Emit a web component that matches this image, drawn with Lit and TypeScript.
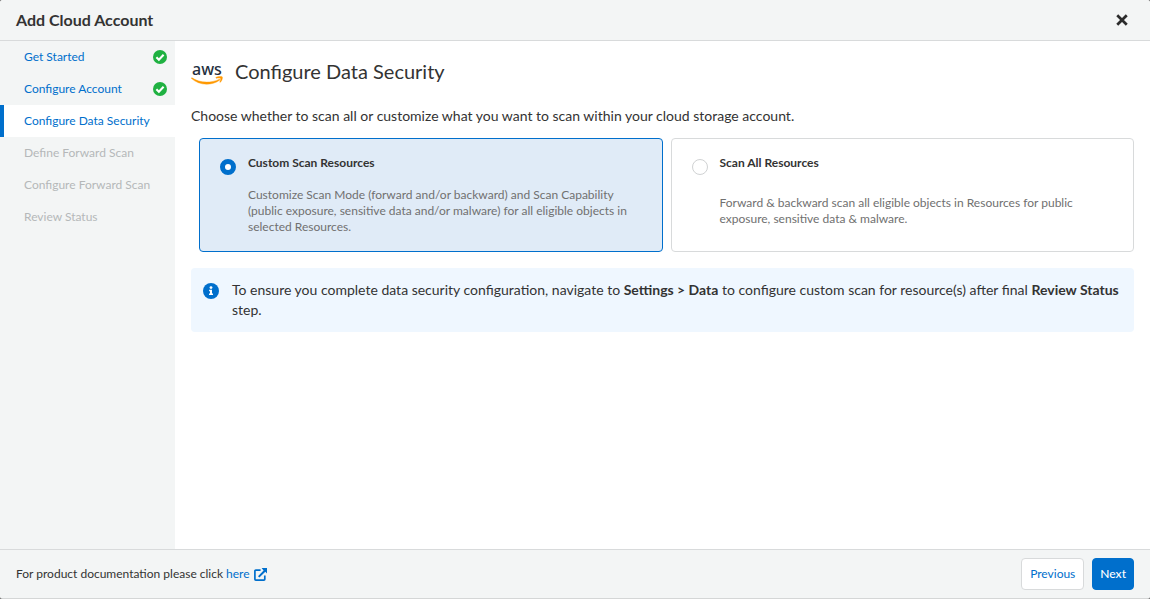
import { LitElement, html, css, svg } from "lit";
import { customElement, state } from "lit/decorators.js";

interface Step {
  label: string;
  status: "done" | "current" | "pending";
}

interface ScanOption {
  id: string;
  title: string;
  text: string;
}

const STEPS: Step[] = [
  { label: "Get Started", status: "done" },
  { label: "Configure Account", status: "done" },
  { label: "Configure Data Security", status: "current" },
  { label: "Define Forward Scan", status: "pending" },
  { label: "Configure Forward Scan", status: "pending" },
  { label: "Review Status", status: "pending" },
];

const OPTIONS: ScanOption[] = [
  {
    id: "custom",
    title: "Custom Scan Resources",
    text: "Customize Scan Mode (forward and/or backward) and Scan Capability (public exposure, sensitive data and/or malware) for all eligible objects in selected Resources.",
  },
  {
    id: "all",
    title: "Scan All Resources",
    text: "Forward & backward scan all eligible objects in Resources for public exposure, sensitive data & malware.",
  },
];

const checkIcon = html`<svg width="14" height="14" viewBox="0 0 14 14" aria-hidden="true">
  <circle cx="7" cy="7" r="7" fill="#1fb141" />
  <path d="M3.4 7.2l2.5 2.5 4.7-4.9" fill="none" stroke="#fff" stroke-width="2.1" />
</svg>`;

const closeIcon = html`<svg width="12" height="12" viewBox="0 0 12 12" aria-hidden="true">
  <path d="M2.2 2.2l7.6 7.6M9.8 2.2l-7.6 7.6" fill="none" stroke="#2b2b2b" stroke-width="2.7" stroke-linecap="square" stroke-linejoin="round" />
</svg>`;

const infoIcon = html`<svg width="16" height="16" viewBox="0 0 16 16" aria-hidden="true">
  <circle cx="8" cy="8" r="8" fill="#006fcc" />
  <circle cx="8" cy="4.6" r="1.4" fill="#fff" />
  <path d="M6.1 6.8h2.9v3.8h1v1.5h-4v-1.5h1v-2.3h-.9z" fill="#fff" />
</svg>`;

const externalIcon = html`<svg width="13" height="13" viewBox="0 0 13 13" aria-hidden="true">
  <path d="M6.6 2.2H1.8a.9.9 0 0 0-.9.9v8.1c0 .5.4.9.9.9h8.1c.5 0 .9-.4.9-.9V7.4" fill="none" stroke="currentColor" stroke-width="1.7" />
  <path d="M7.6 0H13v5.4l-1.7-1.7-5.9 5.9L4 8.2l5.6-5.7z" fill="currentColor" />
</svg>`;

const awsSwoosh = svg`
  <g fill="#f90" stroke="#f90" stroke-width=".4" stroke-linejoin="round">
    <path d="M1 20.8c4 2.8 9.2 4.3 14.7 4.3 4.2 0 8.6-1 12.2-2.7.8-.4 1.3.4.6.9-3.6 2.6-8.5 3.9-12.9 3.9-5.9 0-11.2-2.2-15.1-5.7-.3-.4.1-.9.5-.7z" />
    <path d="M25 20.4c1.6-1.1 5.800-1.200 6.300-.5.5.7-.3 3.900-1.900 5.300-.4.300-.7.100-.6-.3.6-1.300 1.100-2.900.8-3.400-.3-.5-2.200-.5-4.200-.3-.6 0-.8-.5-.4-.8z" />
  </g>`;

@customElement("app-root")
export class AppRoot extends LitElement {
  @state() private selected = "custom";

  static styles = css`
    :host {
      display: block;
      background: #777;
      color: #333;
      font: 14px/20px Lato, "Open Sans", sans-serif;
    }
    * {
      box-sizing: border-box;
    }
    .dialog {
      display: flex;
      flex-direction: column;
      min-height: 100vh;
      background: #fff;
      border-bottom: 1px solid #d4d6d6;
      border-radius: 3px;
      overflow: hidden;
    }
    .header {
      display: flex;
      align-items: center;
      justify-content: space-between;
      padding: 8px 16px;
      background: #f3f5f5;
      border-bottom: 1px solid #d8dadb;
    }
    .title {
      margin: 0;
      font-size: 16px;
      line-height: 24px;
      font-weight: 700;
    }
    .close {
      display: flex;
      padding: 6px;
      border: 0;
      background: none;
      cursor: pointer;
    }
    .body {
      display: flex;
      flex: 1;
    }
    .steps {
      flex: none;
      width: 175px;
      background: #f3f5f5;
    }
    .list {
      margin: 0;
      padding: 0;
      list-style: none;
    }
    .step {
      display: flex;
      align-items: center;
      justify-content: space-between;
      height: 32px;
      padding: 0 8px 0 20px;
      border-left: 4px solid transparent;
      font-size: 12px;
      line-height: 16px;
      color: #006fcc;
      text-decoration: none;
    }
    .step.current {
      border-left-color: #006fcc;
      background: #fff;
    }
    .step.pending {
      color: #b5b8b9;
    }
    .main {
      flex: 1;
      min-width: 0;
      padding: 16px;
    }
    .heading {
      display: flex;
      align-items: center;
      gap: 12px;
    }
    .aws {
      font: 500 16px "Noto Sans", sans-serif;
    }
    .h2 {
      margin: 0;
      font-size: 20px;
      line-height: 28px;
      font-weight: 400;
    }
    .intro {
      margin: 21px 0 12px;
    }
    .options {
      display: grid;
      grid-template-columns: 1fr 1fr;
      gap: 8px;
      min-width: 0;
      margin: 0 0 16px;
      padding: 0 0 0 8px;
      border: 0;
    }
    .card {
      display: flex;
      gap: 12px;
      min-height: 114px;
      padding: 16px 32px 0 20px;
      border: 1px solid #d8dadb;
      border-radius: 4px;
      font-size: 12px;
      line-height: 16px;
      cursor: pointer;
    }
    .card.on {
      border-color: #006fcc;
      background: #e0ebf7;
    }
    .radio {
      flex: none;
      width: 16px;
      height: 16px;
      margin: 4px 0 0;
      appearance: none;
      border: 1px solid #d0d2d3;
      border-radius: 50%;
      background: #fff;
    }
    .radio:checked {
      border: 5px solid #006fcc;
    }
    .copy {
      display: flex;
      flex-direction: column;
      flex: 1;
    }
    .name {
      font-weight: 700;
    }
    .text {
      margin: auto 0;
      color: #707070;
    }
    .info {
      display: flex;
      gap: 13px;
      padding: 12px;
      border-radius: 4px;
      background: #eff7ff;
    }
    .info svg {
      flex: none;
      margin-top: 3px;
    }
    .info p {
      margin: 0;
    }
    .footer {
      display: flex;
      align-items: center;
      justify-content: space-between;
      padding: 8px 16px;
      background: #f3f5f5;
      border-top: 1px solid #d8dadb;
      font-size: 12px;
      line-height: 16px;
    }
    .docs {
      display: flex;
      gap: 3px;
      margin: 0;
    }
    .link {
      display: inline-flex;
      align-items: center;
      gap: 4px;
      color: #006fcc;
      text-decoration: none;
    }
    .actions {
      display: flex;
      gap: 8px;
    }
    .btn {
      height: 32px;
      padding: 0 8px;
      border: 1px solid #d8dadb;
      border-radius: 4px;
      background: #fff;
      color: #006fcc;
      font: inherit;
      cursor: pointer;
    }
    .btn.primary {
      padding: 0 7px;
      border-color: #006fcc;
      background: #006fcc;
      color: #fff;
      font-weight: 500;
    }
  `;

  private renderStep(step: Step) {
    return html`<li>
      <a
        class="step ${step.status}"
        href="#"
        aria-current=${step.status === "current" ? "step" : "false"}
        aria-disabled=${step.status === "pending" ? "true" : "false"}
        ><span>${step.label}</span>${step.status === "done" ? checkIcon : ""}</a
      >
    </li>`;
  }

  private renderOption(option: ScanOption) {
    const on = this.selected === option.id;
    return html`<label class="card ${on ? "on" : ""}" for=${option.id}>
      <input
        class="radio"
        type="radio"
        name="scan"
        id=${option.id}
        .checked=${on}
        @change=${() => (this.selected = option.id)}
      />
      <span class="copy">
        <span class="name">${option.title}</span>
        <span class="text">${option.text}</span>
      </span>
    </label>`;
  }

  render() {
    return html`<div class="dialog">
      <header class="header">
        <h1 class="title">Add Cloud Account</h1>
        <button class="close" type="button" aria-label="Close">${closeIcon}</button>
      </header>
      <div class="body">
        <nav class="steps" aria-label="Steps">
          <ul class="list">
            ${STEPS.map((s) => this.renderStep(s))}
          </ul>
        </nav>
        <main class="main">
          <div class="heading">
            <svg width="32" height="28" viewBox="0 0 32 28" role="img" aria-label="aws">
              <text class="aws" x="1" y="18" fill="#252f3e">aws</text>
              ${awsSwoosh}
            </svg>
            <h2 class="h2">Configure Data Security</h2>
          </div>
          <p class="intro">
            Choose whether to scan all or customize what you want to scan within your cloud storage account.
          </p>
          <fieldset class="options" aria-label="Scan scope">
            ${OPTIONS.map((o) => this.renderOption(o))}
          </fieldset>
          <div class="info">
            ${infoIcon}
            <p>
              To ensure you complete data security configuration, navigate to <b>Settings &gt; Data</b> to
              configure custom scan for resource(s) after final <b>Review Status</b> step.
            </p>
          </div>
        </main>
      </div>
      <footer class="footer">
        <p class="docs">
          <span>For product documentation please click</span>
          <a class="link" href="#">here ${externalIcon}</a>
        </p>
        <div class="actions">
          <button class="btn" type="button">Previous</button>
          <button class="btn primary" type="button">Next</button>
        </div>
      </footer>
    </div>`;
  }
}
